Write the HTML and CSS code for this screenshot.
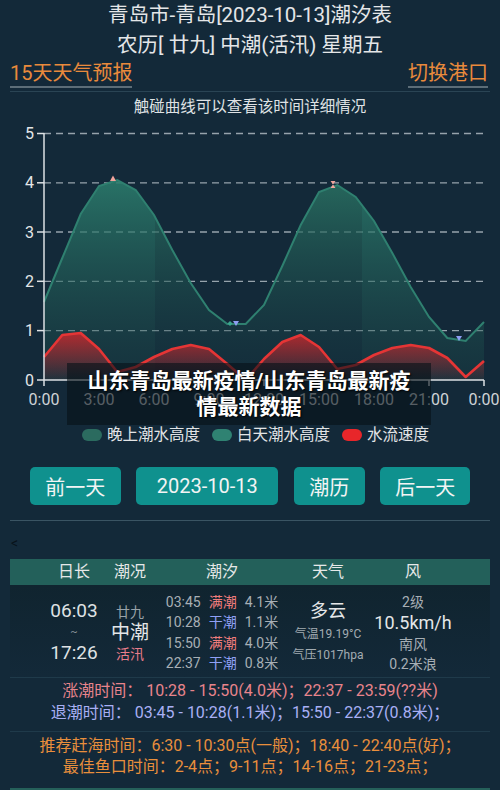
FILE: index.html
```html
<!DOCTYPE html>
<html lang="zh-CN">
<head>
  <meta charset="UTF-8">
  <title>青岛潮汐表</title>
  <link rel="stylesheet" href="styles.css">
</head>
<body>
  <div class="header">
    <div class="title">青岛市-青岛[2023-10-13]潮汐表</div>
    <div class="title">农历[ 廿九] 中潮(活汛) 星期五</div>
  </div>
  <div class="links">
    <a class="link">15天天气预报</a>
    <a class="link">切换港口</a>
  </div>
  <div class="divider divider-top"></div>
  <div class="chart-tip">触碰曲线可以查看该时间详细情况</div>

  <div class="chart-wrap">
    <svg class="chart" width="500" height="292" viewBox="0 117 500 292">
      <defs>
        <linearGradient id="gNight" gradientUnits="userSpaceOnUse" x1="0" y1="180" x2="0" y2="380">
          <stop offset="0" stop-color="#2c7f6e" stop-opacity="0.85"/>
          <stop offset="1" stop-color="#1d4d4b" stop-opacity="0.25"/>
        </linearGradient>
        <linearGradient id="gDay" gradientUnits="userSpaceOnUse" x1="0" y1="180" x2="0" y2="380">
          <stop offset="0" stop-color="#2a7363" stop-opacity="0.85"/>
          <stop offset="1" stop-color="#173c42" stop-opacity="0.2"/>
        </linearGradient>
        <linearGradient id="gRed" gradientUnits="userSpaceOnUse" x1="0" y1="332" x2="0" y2="380">
          <stop offset="0" stop-color="#d9262a" stop-opacity="0.8"/>
          <stop offset="1" stop-color="#d9262a" stop-opacity="0.05"/>
        </linearGradient>
        <clipPath id="clipDay"><rect x="155" y="117" width="207" height="292"/></clipPath>
        <clipPath id="clipNight">
          <rect x="0" y="117" width="155" height="292"/>
          <rect x="362" y="117" width="138" height="292"/>
        </clipPath>
      </defs>

      <!-- 网格线 -->
      <g class="grid">
        <line x1="44" y1="133.5" x2="484" y2="133.5"/>
        <line x1="44" y1="182.8" x2="484" y2="182.8"/>
        <line x1="44" y1="232" x2="484" y2="232"/>
        <line x1="44" y1="281.3" x2="484" y2="281.3"/>
        <line x1="44" y1="330.6" x2="484" y2="330.6"/>
      </g>

      <!-- 潮水高度 -->
      <polygon clip-path="url(#clipNight)" fill="url(#gNight)" points="44,302 62.3,258 80.7,214 99,186 117.3,180 135.7,190 154,215 172.3,250 190.7,283 209,310 227.3,324 245.7,324 264,305 282.3,266 300.7,225 319,192 337.3,185 355.7,197 374,221 392.3,253 410.7,287 429,317 447.3,338 465.7,341 484,322 484,380 44,380"/>
      <polygon clip-path="url(#clipDay)" fill="url(#gDay)" points="44,302 62.3,258 80.7,214 99,186 117.3,180 135.7,190 154,215 172.3,250 190.7,283 209,310 227.3,324 245.7,324 264,305 282.3,266 300.7,225 319,192 337.3,185 355.7,197 374,221 392.3,253 410.7,287 429,317 447.3,338 465.7,341 484,322 484,380 44,380"/>

      <!-- 水流速度 -->
      <polygon fill="url(#gRed)" points="44,357 62.3,335 80.7,333 99,349 117.3,372 135.7,367 154,357 172.3,349 190.7,345 209,349 227.3,364 245.7,380 264,359 282.3,342 300.7,335 319,347 337.3,369 355.7,365 374,355 392.3,348 410.7,345 429,348 447.3,358 465.7,377 484,361 484,380 44,380"/>

      <polyline class="tide-line" points="44,302 62.3,258 80.7,214 99,186 117.3,180 135.7,190 154,215 172.3,250 190.7,283 209,310 227.3,324 245.7,324 264,305 282.3,266 300.7,225 319,192 337.3,185 355.7,197 374,221 392.3,253 410.7,287 429,317 447.3,338 465.7,341 484,322"/>
      <polyline class="flow-line" points="44,357 62.3,335 80.7,333 99,349 117.3,372 135.7,367 154,357 172.3,349 190.7,345 209,349 227.3,364 245.7,380 264,359 282.3,342 300.7,335 319,347 337.3,369 355.7,365 374,355 392.3,348 410.7,345 429,348 447.3,358 465.7,377 484,361"/>

      <!-- 坐标轴 -->
      <g class="axis">
        <line x1="44" y1="133" x2="44" y2="380"/>
        <line x1="37" y1="380" x2="484" y2="380"/>
        <line x1="37" y1="133.5" x2="44" y2="133.5"/>
        <line x1="37" y1="182.8" x2="44" y2="182.8"/>
        <line x1="37" y1="232" x2="44" y2="232"/>
        <line x1="37" y1="281.3" x2="44" y2="281.3"/>
        <line x1="37" y1="330.6" x2="44" y2="330.6"/>
        <line x1="44" y1="380" x2="44" y2="386"/>
        <line x1="99" y1="380" x2="99" y2="386"/>
        <line x1="154" y1="380" x2="154" y2="386"/>
        <line x1="209" y1="380" x2="209" y2="386"/>
        <line x1="264" y1="380" x2="264" y2="386"/>
        <line x1="319" y1="380" x2="319" y2="386"/>
        <line x1="374" y1="380" x2="374" y2="386"/>
        <line x1="429" y1="380" x2="429" y2="386"/>
        <line x1="484" y1="380" x2="484" y2="386"/>
      </g>

      <!-- 高低潮标记 -->
      <polygon fill="#f2a49c" points="110,181 113,175.5 116,181"/>
      <polygon fill="#f2a49c" points="330.5,181 335.5,181 333,184.5 335.5,188 330.5,188 333,184.5"/>
      <polygon fill="#3aa58c" points="230,321 232.5,323.5 230,326 227.5,323.5"/>
      <polygon fill="#8e9ef2" points="233,321 239,321 236,326"/>
      <polygon fill="#8e9ef2" points="456,336 462,336 459,341"/>

      <g class="y-label">
        <text x="34" y="139">5</text>
        <text x="34" y="188.3">4</text>
        <text x="34" y="237.5">3</text>
        <text x="34" y="286.8">2</text>
        <text x="34" y="336.1">1</text>
        <text x="34" y="385.5">0</text>
      </g>
      <g class="x-label">
        <text x="44" y="405">0:00</text>
        <text x="99" y="405">3:00</text>
        <text x="154" y="405">6:00</text>
        <text x="209" y="405">9:00</text>
        <text x="264" y="405">12:00</text>
        <text x="319" y="405">15:00</text>
        <text x="374" y="405">18:00</text>
        <text x="429" y="405">21:00</text>
        <text x="484" y="405">0:00</text>
      </g>
    </svg>
    <div class="overlay">山东青岛最新疫情/山东青岛最新疫情最新数据</div>
  </div>

  <div class="legend">
    <span class="legend-item"><i class="pill pill-night"></i>晚上潮水高度</span>
    <span class="legend-item"><i class="pill pill-day"></i>白天潮水高度</span>
    <span class="legend-item"><i class="pill pill-flow"></i>水流速度</span>
  </div>

  <div class="btn-row">
    <button class="btn btn-prev">前一天</button>
    <button class="btn btn-date">2023-10-13</button>
    <button class="btn btn-cal">潮历</button>
    <button class="btn btn-next">后一天</button>
  </div>
  <div class="divider divider-btn"></div>
  <div class="back">&lt;</div>

  <div class="table">
    <div class="table-head cols">
      <span>日长</span>
      <span>潮况</span>
      <span>潮汐</span>
      <span>天气</span>
      <span>风</span>
    </div>
    <div class="table-body cols">
      <div class="cell cell-day">
        <span class="big-time">06:03</span>
        <span class="tilde">~</span>
        <span class="big-time">17:26</span>
      </div>
      <div class="cell cell-cond">
        <span class="lunar">廿九</span>
        <span class="cond">中潮</span>
        <span class="cond-sub">活汛</span>
      </div>
      <div class="cell cell-tide">
        <div class="tide-row"><span>03:45</span><span class="high">满潮</span><span>4.1米</span></div>
        <div class="tide-row"><span>10:28</span><span class="low">干潮</span><span>1.1米</span></div>
        <div class="tide-row"><span>15:50</span><span class="high">满潮</span><span>4.0米</span></div>
        <div class="tide-row"><span>22:37</span><span class="low">干潮</span><span>0.8米</span></div>
      </div>
      <div class="cell cell-weather">
        <span class="weather">多云</span>
        <span class="small">气温19.19°C</span>
        <span class="small">气压1017hpa</span>
      </div>
      <div class="cell cell-wind">
        <span class="wind-line">2级</span>
        <span class="wind-speed">10.5km/h</span>
        <span class="wind-line">南风</span>
        <span class="wind-line">0.2米浪</span>
      </div>
    </div>
  </div>
  <div class="divider divider-faint"></div>

  <div class="tide-info">
    <div class="rise">涨潮时间：&nbsp;10:28 - 15:50(4.0米)；22:37 - 23:59(??米)</div>
    <div class="fall">退潮时间：&nbsp;03:45 - 10:28(1.1米)；15:50 - 22:37(0.8米)；</div>
  </div>
  <div class="divider divider-faint divider-mid"></div>
  <div class="tips">
    <div>推荐赶海时间：6:30 - 10:30点(一般)；18:40 - 22:40点(好)；</div>
    <div>最佳鱼口时间：2-4点；9-11点；14-16点；21-23点；</div>
  </div>
  <div class="footer-bar"></div>
</body>
</html>
```

FILE: styles.css
```css
body {
  margin: 0;
  background-color: #132939;
  color: #e2e4e6;
  font-family: Roboto, "Noto Sans CJK SC", sans-serif;
  overflow: hidden;
}
.header {
  text-align: center;
}
.title {
  font-size: 20.5px;
  line-height: 30px;
  color: #e4e6e8;
}
.links {
  display: flex;
  justify-content: space-between;
  padding: 0 12px 0 10px;
  height: 28px;
}
.link {
  font-size: 20px;
  line-height: 26px;
  color: #e98a3c;
  border-bottom: 2px solid #5c6d78;
}
.divider {
  height: 1px;
  margin: 0 10px;
  background-color: #1f3a4a;
}
.divider-top {
  margin-top: 3px;
  background-color: #2a4454;
}
.chart-tip {
  margin-top: 5px;
  font-size: 15.5px;
  line-height: 20px;
  text-align: center;
  color: #dfe2e4;
}
.chart-wrap {
  position: relative;
  height: 292px;
}
.chart {
  display: block;
}
.grid line {
  stroke: #aeb9c1;
  stroke-width: 1.3;
  stroke-dasharray: 7 5;
  opacity: 0.85;
}
.tide-line {
  fill: none;
  stroke: #2f8070;
  stroke-width: 2;
}
.flow-line {
  fill: none;
  stroke: #e53535;
  stroke-width: 2.6;
  stroke-linejoin: round;
}
.axis line {
  stroke: #dde1e4;
  stroke-width: 1.5;
}
.y-label text {
  font-size: 16px;
  fill: #e4e6e8;
  text-anchor: end;
}
.x-label text {
  font-size: 16px;
  fill: #cfd3d6;
  text-anchor: middle;
}
.overlay {
  position: absolute;
  left: 67px;
  top: 246px;
  width: 364px;
  height: 62px;
  box-sizing: border-box;
  padding: 5px 16px 0;
  background-color: rgba(6, 16, 24, 0.6);
  color: #fff;
  font-size: 21px;
  font-weight: bold;
  line-height: 26px;
  text-align: center;
  text-shadow: 1px 1px 2px #000;
}
.legend {
  display: flex;
  justify-content: center;
  gap: 12px;
  margin-top: 16px;
  padding-left: 11px;
  font-size: 15.5px;
  line-height: 20px;
  color: #e2e4e6;
}
.legend-item {
  display: flex;
  align-items: center;
  gap: 5px;
}
.pill {
  display: inline-block;
  width: 20px;
  height: 12px;
  border-radius: 6px;
}
.pill-night {
  background-color: #2b6b5f;
}
.pill-day {
  background-color: #2f8272;
}
.pill-flow {
  background-color: #e8262a;
}
.btn-row {
  display: flex;
  justify-content: center;
  gap: 15.5px;
  margin-top: 22px;
}
.btn {
  height: 38px;
  border: none;
  border-radius: 5px;
  background-color: #0f918e;
  color: #f2f4f4;
  font-family: Roboto, "Noto Sans CJK SC", sans-serif;
  font-size: 20px;
  padding: 0;
}
.btn-prev {
  width: 91px;
}
.btn-date {
  width: 142px;
}
.btn-cal {
  width: 71px;
}
.btn-next {
  width: 90px;
}
.divider-btn {
  margin-top: 15px;
  background-color: #3a5463;
}
.back {
  margin-top: 12px;
  padding-left: 11px;
  font-size: 14px;
  line-height: 20px;
  color: #08121a;
}
.table {
  margin: 6px 10px 0;
}
.cols {
  display: grid;
  grid-template-columns: 60px 52px 132px 80px 90px;
  padding-left: 34px;
}
.table-head {
  height: 26px;
  background-color: #23605a;
  font-size: 16px;
  line-height: 26px;
  color: #e6e8e8;
  text-align: center;
}
.table-body {
  height: 92px;
  background: linear-gradient(180deg, #10242f, #132939);
}
.cell {
  display: flex;
  flex-direction: column;
  align-items: center;
  white-space: nowrap;
}
.cell-day {
  padding-top: 13px;
}
.big-time {
  font-size: 19px;
  line-height: 26px;
  color: #dfe2e4;
}
.tilde {
  font-size: 11px;
  line-height: 16px;
  color: #8a959c;
}
.cell-cond {
  padding-top: 17px;
}
.lunar {
  font-size: 14px;
  line-height: 20px;
  color: #98a2a8;
}
.cond {
  font-size: 19px;
  line-height: 22px;
  color: #e4e6e8;
}
.cond-sub {
  font-size: 14px;
  line-height: 20px;
  color: #e87d8a;
}
.cell-tide {
  padding-top: 7px;
}
.tide-row {
  display: flex;
  gap: 8px;
  font-size: 14px;
  line-height: 20.4px;
  color: #a7afb5;
}
.high {
  color: #f07c7c;
}
.low {
  color: #8fa0f5;
}
.cell-weather {
  padding-top: 13px;
}
.weather {
  font-size: 18px;
  line-height: 26px;
  color: #e4e6e8;
}
.small {
  font-size: 12px;
  line-height: 20.5px;
  color: #a3acb2;
}
.cell-wind {
  padding-top: 7px;
}
.wind-line {
  font-size: 14px;
  line-height: 20px;
  color: #a7afb5;
}
.wind-speed {
  font-size: 18px;
  line-height: 22px;
  color: #e4e6e8;
}
.tide-info {
  padding-top: 2px;
  font-size: 16px;
  line-height: 22px;
  text-align: center;
}
.rise {
  color: #e8848c;
}
.fall {
  color: #a9b0f5;
}
.divider-mid {
  margin-top: 7px;
}
.tips {
  padding-top: 3px;
  font-size: 16px;
  line-height: 21px;
  text-align: center;
  color: #e98f3c;
}
.footer-bar {
  margin: 11px 10px 0;
  height: 10px;
  background-color: #25605a;
}
```
